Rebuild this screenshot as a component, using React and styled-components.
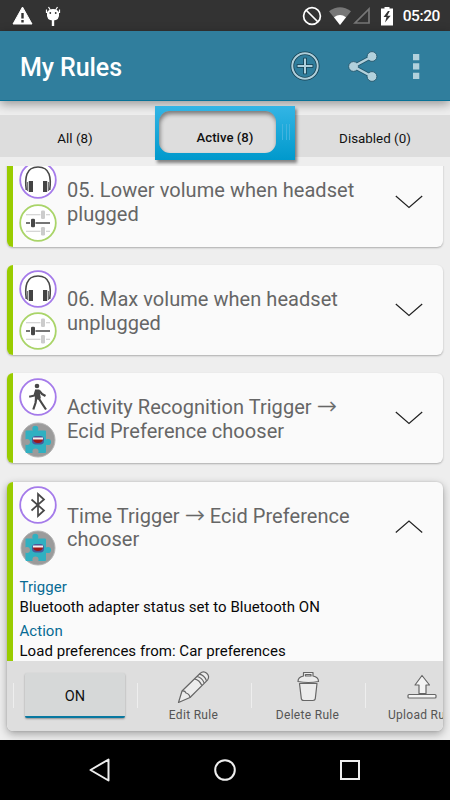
import React, { useState } from 'react';
import styled, { createGlobalStyle, css } from 'styled-components';

const GlobalStyle = createGlobalStyle`
  * {
    box-sizing: border-box;
  }

  body {
    margin: 0;
    background: #eeeeee;
    font-family: Roboto, 'Liberation Sans', sans-serif;
  }

  svg {
    display: block;
    flex-shrink: 0;
  }
`;

const Screen = styled.div`
  width: 450px;
  height: 800px;
  display: flex;
  flex-direction: column;
  background: #eeeeee;
  overflow: hidden;
`;

const StatusBar = styled.div`
  height: 31px;
  flex-shrink: 0;
  display: flex;
  align-items: center;
  justify-content: space-between;
  padding: 1px 10px 0 12px;
  background: #333333;
  color: #ffffff;
`;

const StatusGroup = styled.div`
  display: flex;
  align-items: center;
  gap: ${(props) => props.$gap || 0}px;
`;

const Clock = styled.span`
  font-size: 15.5px;
  font-weight: 500;
  line-height: 20px;
  margin-left: 8px;
  letter-spacing: -0.4px;
`;

const Header = styled.header`
  height: 70px;
  flex-shrink: 0;
  display: flex;
  align-items: center;
  justify-content: space-between;
  padding: 0 30px 0 20px;
  background: #307e9d;
  border-bottom: 1px solid #087196;
  box-shadow: 0 3px 10px rgba(0, 0, 0, 0.38);
`;

const Title = styled.h1`
  margin: 0;
  padding-top: 3px;
  color: #ffffff;
  font-size: 25px;
  font-weight: 500;
  letter-spacing: -0.08px;
`;

const HeaderActions = styled.div`
  display: flex;
  align-items: center;
  gap: 28px;
  padding-top: 1px;
`;

const IconButton = styled.button`
  display: flex;
  padding: 0;
  border: none;
  background: none;
  cursor: pointer;
`;

const Tabs = styled.nav`
  height: 42px;
  flex-shrink: 0;
  display: flex;
  align-items: center;
  margin: 14px 0 9px;
  background: #dddddd;
`;

const tabText = css`
  color: #111111;
  font-family: inherit;
  font-size: 13.4px;
  cursor: pointer;
`;

const Tab = styled.button`
  ${tabText}
  width: 155px;
  height: 42px;
  padding: 5px ${(props) => (props.$side === 'left' ? '5px 0 0' : '0 0 5px')};
  border: none;
  background: none;
`;

const Thumb = styled.div`
  width: 140px;
  height: 54px;
  margin: -9px 0 -3px;
  flex-shrink: 0;
  display: flex;
  align-items: flex-start;
  padding: 5px 5px 0 4px;
  background: linear-gradient(#33b5e5, #0099cc);
  box-shadow: 2px 3px 3px rgba(0, 0, 0, 0.45);
  position: relative;
  z-index: 1;
`;

const ThumbWindow = styled.button`
  ${tabText}
  width: 117px;
  height: 42px;
  margin-right: 6px;
  padding: 15px 0 3px 15px;
  border: none;
  border-radius: 11px;
  background: #dddddd;
  box-shadow: inset 1px 3px 4px rgba(0, 0, 0, 0.45);
  font-size: 13.2px;
  font-weight: 500;
  line-height: 16px;
  white-space: nowrap;
`;

const Grip = styled.div`
  height: 16px;
  width: 8px;
  margin-top: 13px;
  border: solid #42b3df;
  border-width: 0 1px;
  display: flex;
  justify-content: center;

  &::before {
    content: '';
    width: 1px;
    background: #42b3df;
  }
`;

const RuleList = styled.main`
  flex: 1;
  min-height: 0;
  overflow: hidden;
  display: flex;
  flex-direction: column;
  gap: 18.4px;
  padding: 0 7px;
`;

const Card = styled.article`
  flex-shrink: 0;
  border-radius: 6px;
  background: #fafafa;
  box-shadow: ${(props) =>
    props.$open
      ? '0 3px 8px rgba(0, 0, 0, 0.32), 0 0 2px rgba(0, 0, 0, 0.15)'
      : '0 1px 2px rgba(0, 0, 0, 0.28)'};
  overflow: hidden;

  &:first-child {
    margin-top: -9.5px;
  }
`;

const CardBody = styled.div`
  border-left: 6px solid #99cc00;
  height: ${(props) => (props.$open ? '179.2px' : '90px')};
`;

const CardHead = styled.div`
  height: 90px;
  display: flex;
  align-items: center;
  padding: 0 20px 0 6px;
`;

const BadgeColumn = styled.div`
  display: flex;
  flex-direction: column;
  gap: 4.5px;
  margin-right: 10px;
`;

const RuleTitle = styled.h2`
  flex: 1;
  margin: 0;
  padding-top: 3.4px;
  color: #666666;
  font-size: 20px;
  font-weight: 400;
  line-height: 23.7px;
  letter-spacing: 0.04px;
  white-space: pre-line;
`;

const Arrow = styled.span`
  font-family: 'DejaVu Sans', sans-serif;
  font-size: 24px;
  font-weight: 200;
  line-height: 0;
  -webkit-text-stroke: 0.3px #666666;
`;

const Details = styled.dl`
  margin: 0;
  padding: 5px 7px 0 6.5px;
  font-size: 15px;
  line-height: 20.5px;
  letter-spacing: 0.04px;
`;

const DetailLabel = styled.dt`
  color: #076b94;

  dd + & {
    margin-top: 3.3px;
  }
`;

const DetailValue = styled.dd`
  margin: 0;
  color: #080808;
`;

const ActionBar = styled.div`
  height: 70px;
  display: flex;
  align-items: center;
  background: #dedede;
  overflow: hidden;
  padding-left: 6px;
`;

const Divider = styled.div`
  width: 1px;
  height: 25px;
  flex-shrink: 0;
  background: #eeeeee;
`;

const Toggle = styled.button`
  width: 100px;
  height: 45px;
  flex-shrink: 0;
  margin: 0 12px 0 11px;
  padding: 4px 0 0;
  border: none;
  border-bottom: 2px solid #0878a0;
  border-radius: 2px;
  background: #d6d8d8;
  box-shadow: 0 1px 2px rgba(0, 0, 0, 0.35);
  color: #111111;
  font-family: inherit;
  font-size: 14.5px;
`;

const ActionItem = styled.button`
  width: 113px;
  height: 70px;
  flex-shrink: 0;
  display: flex;
  flex-direction: column;
  align-items: center;
  gap: 2px;
  padding: 8px 2px 0 0;
  border: none;
  background: none;
  color: #555555;
  font-family: inherit;
  font-size: 12px;
  letter-spacing: 0.3px;
  line-height: 16px;
  white-space: nowrap;
`;

const NavBar = styled.footer`
  height: 60px;
  flex-shrink: 0;
  display: flex;
  align-items: center;
  justify-content: center;
  gap: 101px;
  background: #000000;
  position: relative;
`;

const WarningIcon = () => (
  <svg width="21" height="20" viewBox="0 0 21 20">
    <path d="M10.5 1 20 18H1Z" fill="#fff" stroke="#fff" strokeLinejoin="round" />
    <path d="M10.5 7v5.5M10.5 14v2.5" stroke="#333" strokeWidth="2.4" />
  </svg>
);

const DroidIcon = () => (
  <svg width="16" height="21" viewBox="0 0 16 21">
    <path d="M3.5 1l1.8 3M12.5 1l-1.8 3M1.5 3.5V7M14.5 3.5V7" stroke="#fff" strokeWidth="1.2" />
    <path d="M2 6.5Q3.5 3 8 3t6 3.5Q15 14.500 8 14.500T2 6.500Z" fill="#fff" />
    <path d="M8 14v6" stroke="#fff" strokeWidth="2.4" />
    <circle cx="5.3" cy="7" r="0.9" fill="#333" />
    <circle cx="10.7" cy="7" r="0.9" fill="#333" />
  </svg>
);

const BlockIcon = () => (
  <svg width="20" height="20" viewBox="0 0 20 20" fill="none" stroke="#fff" strokeWidth="1.7">
    <circle cx="10" cy="10" r="8.4" />
    <path d="M4 4l12 12" />
  </svg>
);

const WifiIcon = () => (
  <svg width="29" height="20" viewBox="-5 0 29 20">
    <path d="M12 19 1 5.2Q12-2.8 23 5.2Z" fill="#777" />
    <path d="M12 19 6 11.2Q12 6.8 18 11.2Z" fill="#fff" />
  </svg>
);

const SignalIcon = () => (
  <svg width="18" height="18" viewBox="0 0 18 18">
    <path d="M16 2V16H2Z" fill="none" stroke="#777" strokeWidth="1.7" />
  </svg>
);

const BatteryIcon = () => (
  <svg width="22" height="20" viewBox="-8 0 22 20">
    <path d="M4.5 1h5v1.5H13v17H1v-17h3.5Z" fill="#fff" />
    <path d="M8 5 3.500 11h3L5 16.500l5.700-6.700H7.300L9.800 5Z" fill="#333" />
  </svg>
);

const AddIcon = () => (
  <svg width="30" height="30" viewBox="0 0 30 30" fill="none">
    <g stroke="#173f50" strokeWidth="3.6">
      <circle cx="15" cy="15" r="12.7" />
      <path d="M15 6.700v16.600M6.700 15h16.600" />
    </g>
    <g stroke="#afd0dc" strokeWidth="2">
      <circle cx="15" cy="15" r="12.7" />
      <path d="M15 7.5v15M7.5 15h15" />
    </g>
  </svg>
);

const ShareIcon = () => (
  <svg width="30" height="31" viewBox="0 0 30 31">
    <path d="M24 5.5 5.5 15.5 24 25.5" fill="none" stroke="#24566b" strokeWidth="4" />
    <g fill="#b2d1dc" stroke="#24566b" strokeWidth="0.9">
      <circle cx="24" cy="5.5" r="4.9" />
      <circle cx="5.5" cy="15.5" r="4.9" />
      <circle cx="24" cy="25.5" r="4.9" />
    </g>
    <path d="M24 5.5 5.5 15.5 24 25.5" fill="none" stroke="#b2d1dc" strokeWidth="2.5" />
  </svg>
);

const MoreIcon = () => (
  <svg width="14" height="27" viewBox="-6 0 14 27" fill="#b2d1dc">
    <path d="M1 1h6.300v6.300H1ZM1 10.300h6.300v6.300H1ZM1 19.700h6.300V26H1Z" />
  </svg>
);

const HeadsetBadge = () => (
  <svg width="38" height="38" viewBox="0 0 38 38" fill="none">
    <circle cx="19" cy="19" r="17.8" fill="#fff" stroke="#a57bea" strokeWidth="1.8" />
    <path
      d="M7.300 29C6.300 22 6.500 17 8 13 10 7.500 14 6 19 6s9 1.500 11 7c1.500 4 1.700 9 .7 16"
      stroke="#484848"
      strokeWidth="1.6"
    />
    <path d="M9.800 20h4.200v11H9.800ZM24 20h4.200v11H24Z" fill="#444" />
    <path d="M8.500 21v9M29.500 21v9" stroke="#777" strokeWidth="1.3" />
  </svg>
);

const MixerBadge = () => (
  <svg width="38" height="38" viewBox="0 0 38 38" fill="none">
    <circle cx="19" cy="19" r="17.8" fill="#fff" stroke="#a9d468" strokeWidth="1.8" />
    <path d="M7 10.800h14.500M27 10.800h4M7 27.200h14.500M27 27.200h4" stroke="#c9c9c9" strokeWidth="1.1" />
    <path d="M7 19h4M16.500 19H31" stroke="#484848" strokeWidth="1.5" />
    <rect x="22" y="6.5" width="4" height="8.6" rx="1.3" fill="#ccc" />
    <rect x="22" y="22.9" width="4" height="8.6" rx="1.3" fill="#ccc" />
    <rect x="12" y="14.7" width="4" height="8.6" rx="1.3" fill="#484848" />
  </svg>
);

const WalkBadge = () => (
  <svg width="38" height="38" viewBox="0 0 38 38" fill="none">
    <circle cx="19" cy="19" r="17.8" fill="#fff" stroke="#a57bea" strokeWidth="1.8" />
    <circle cx="18" cy="8" r="2.3" fill="#484848" />
    <path d="M16 11.500h4.300l1.500 8.500-1.200 1.500h-4.800Z" fill="#484848" />
    <path
      d="M17 12.500l-1.500 5-5.300 1.200M20 12.500l3 3.500 3.500 2M17.200 20l-.7 5-2.200 6.500M19.500 20l3.500 5.500 4 6"
      stroke="#484848"
      strokeWidth="2.2"
      strokeLinejoin="round"
    />
  </svg>
);

const BluetoothBadge = () => (
  <svg width="38" height="38" viewBox="0 0 38 38" fill="none">
    <circle cx="19" cy="19" r="17.8" fill="#fff" stroke="#a57bea" strokeWidth="1.8" />
    <path d="M12.500 13.500l12.500 11-6 5.500V8l6 5.500-12.500 11" stroke="#484848" strokeWidth="1.7" />
  </svg>
);

const PuzzleBadge = () => (
  <svg width="38" height="38" viewBox="0 0 38 38">
    <circle cx="19" cy="19" r="17" fill="#9b9b9b" stroke="#b5b5b5" />
    <g fill="#30b0c1">
      <rect x="6.5" y="9.5" width="20.5" height="22.5" rx="1" />
      <circle cx="16.3" cy="7.8" r="3" />
      <circle cx="29" cy="21" r="3.1" />
    </g>
    <g fill="#9b9b9b">
      <circle cx="8" cy="21" r="3" />
      <circle cx="16.5" cy="30.5" r="3.1" />
      <path d="M5 19h2v4H5ZM15 30h3v3h-3Z" />
    </g>
    <rect x="13" y="15" width="12" height="8.5" rx="3.8" fill="#4b5799" />
    <path d="M14 18h10q-.5 4-5 4t-5-4Z" fill="#9d1717" />
    <path d="M14 16.500h10v2H14Z" fill="#f4eeee" />
  </svg>
);

const Chevron = ({ up }) => (
  <svg width="28" height="14" viewBox="0 0 28 14" fill="none" stroke="#222" strokeWidth="1.2">
    <path d={up ? 'M.8 12.500 14 1l13.200 11.500' : 'M.8 1 14 12.500 27.200 1'} />
  </svg>
);

const PencilIcon = () => (
  <svg
    width="36"
    height="36"
    viewBox="0 0 36 36"
    fill="#ececec"
    stroke="#666"
    strokeWidth="1.2"
    strokeLinejoin="round"
  >
    <path d="M2.500 33.500 6 22 24 4.500q3.500-3 6.700-.2t1 6.500L14 28.500Z" />
    <path
      d="M6 22q3-.5 4 2 3.500 1 4 4.500M18.500 9.800q5 1.200 7.200 6.500M21 7.500q5 1 7.200 6.500M23.300 5.200q5 1 7.200 6.500"
      fill="none"
    />
  </svg>
);

const TrashIcon = () => (
  <svg
    width="36"
    height="36"
    viewBox="0 0 36 36"
    fill="#ececec"
    stroke="#666"
    strokeWidth="1.2"
    strokeLinejoin="round"
  >
    <path d="M9.500 14.500h17.500l-1.700 15q-.2 2-2.500 2h-9q-2.300 0-2.500-2Z" />
    <path d="M13.500 7V3.500h9.500V7q5.500 1 5.500 5.500-10 2-20.500 0Q8 8 13.500 7Z" />
    <path d="M15.500 7V5.500h5.500V7Z" fill="#dedede" />
  </svg>
);

const UploadIcon = () => (
  <svg
    width="36"
    height="36"
    viewBox="0 0 36 36"
    fill="#f4f4f4"
    stroke="#666"
    strokeWidth="1.2"
    strokeLinejoin="round"
  >
    <path d="M18 6.500 25.500 16H22v8.500h-7V16h-4Z" />
    <rect x="4" y="25.5" width="28" height="3.5" rx="1" />
  </svg>
);

const rules = [
  { id: 5, title: '05. Lower volume when headset\nplugged', badges: [HeadsetBadge, MixerBadge] },
  { id: 6, title: '06. Max volume when headset\nunplugged', badges: [HeadsetBadge, MixerBadge] },
  {
    id: 7,
    title: 'Activity Recognition Trigger →\nEcid Preference chooser',
    badges: [WalkBadge, PuzzleBadge],
  },
  {
    id: 8,
    title: 'Time Trigger → Ecid Preference\nchooser',
    badges: [BluetoothBadge, PuzzleBadge],
    trigger: 'Bluetooth adapter status set to Bluetooth ON',
    action: 'Load preferences from: Car preferences',
  },
];

const actions = [
  { label: 'Edit Rule', icon: PencilIcon },
  { label: 'Delete Rule', icon: TrashIcon },
  { label: 'Upload Rule', icon: UploadIcon },
];

const RuleCard = ({ rule, open, onToggle }) => {
  const [before, after] = rule.title.split('→');

  return (
    <Card $open={open}>
      <CardBody $open={open}>
        <CardHead>
          <BadgeColumn>
            {rule.badges.map((Badge, i) => (
              <Badge key={i} />
            ))}
          </BadgeColumn>
          <RuleTitle>
            {before}
            {after && <Arrow>→</Arrow>}
            {after}
          </RuleTitle>
          <IconButton onClick={onToggle}>
            <Chevron up={open} />
          </IconButton>
        </CardHead>
        {open && (
          <Details>
            <DetailLabel>Trigger</DetailLabel>
            <DetailValue>{rule.trigger}</DetailValue>
            <DetailLabel>Action</DetailLabel>
            <DetailValue>{rule.action}</DetailValue>
          </Details>
        )}
      </CardBody>
      {open && (
        <ActionBar>
          <Divider />
          <Toggle>ON</Toggle>
          {actions.map(({ label, icon: Icon }) => (
            <React.Fragment key={label}>
              <Divider />
              <ActionItem>
                <Icon />
                {label}
              </ActionItem>
            </React.Fragment>
          ))}
        </ActionBar>
      )}
    </Card>
  );
};

const App = () => {
  const [openId, setOpenId] = useState(8);

  return (
    <>
      <GlobalStyle />
      <Screen>
        <StatusBar>
          <StatusGroup $gap={12}>
            <WarningIcon />
            <DroidIcon />
          </StatusGroup>
          <StatusGroup $gap={1}>
            <BlockIcon />
            <WifiIcon />
            <SignalIcon />
            <BatteryIcon />
            <Clock>05:20</Clock>
          </StatusGroup>
        </StatusBar>

        <Header>
          <Title>My Rules</Title>
          <HeaderActions>
            <IconButton>
              <AddIcon />
            </IconButton>
            <IconButton>
              <ShareIcon />
            </IconButton>
            <IconButton>
              <MoreIcon />
            </IconButton>
          </HeaderActions>
        </Header>

        <Tabs>
          <Tab $side="left">All (8)</Tab>
          <Thumb>
            <ThumbWindow>Active (8)</ThumbWindow>
            <Grip />
          </Thumb>
          <Tab $side="right">Disabled (0)</Tab>
        </Tabs>

        <RuleList>
          {rules.map((rule) => (
            <RuleCard
              key={rule.id}
              rule={rule}
              open={openId === rule.id}
              onToggle={() => setOpenId(openId === rule.id ? null : rule.id)}
            />
          ))}
        </RuleList>

        <NavBar>
          <svg width="24" height="28" viewBox="0 0 24 28" fill="none" stroke="#eee" strokeWidth="2">
            <path d="M20.500 3.500v21L2.500 14Z" strokeLinejoin="round" />
          </svg>
          <svg width="24" height="28" viewBox="0 0 24 28" fill="none" stroke="#eee" strokeWidth="2">
            <circle cx="12" cy="14" r="9.8" />
          </svg>
          <svg width="24" height="28" viewBox="0 0 24 28" fill="none" stroke="#eee" strokeWidth="2">
            <rect x="3" y="5" width="18" height="18" />
          </svg>
        </NavBar>
      </Screen>
    </>
  );
};

export default App;
